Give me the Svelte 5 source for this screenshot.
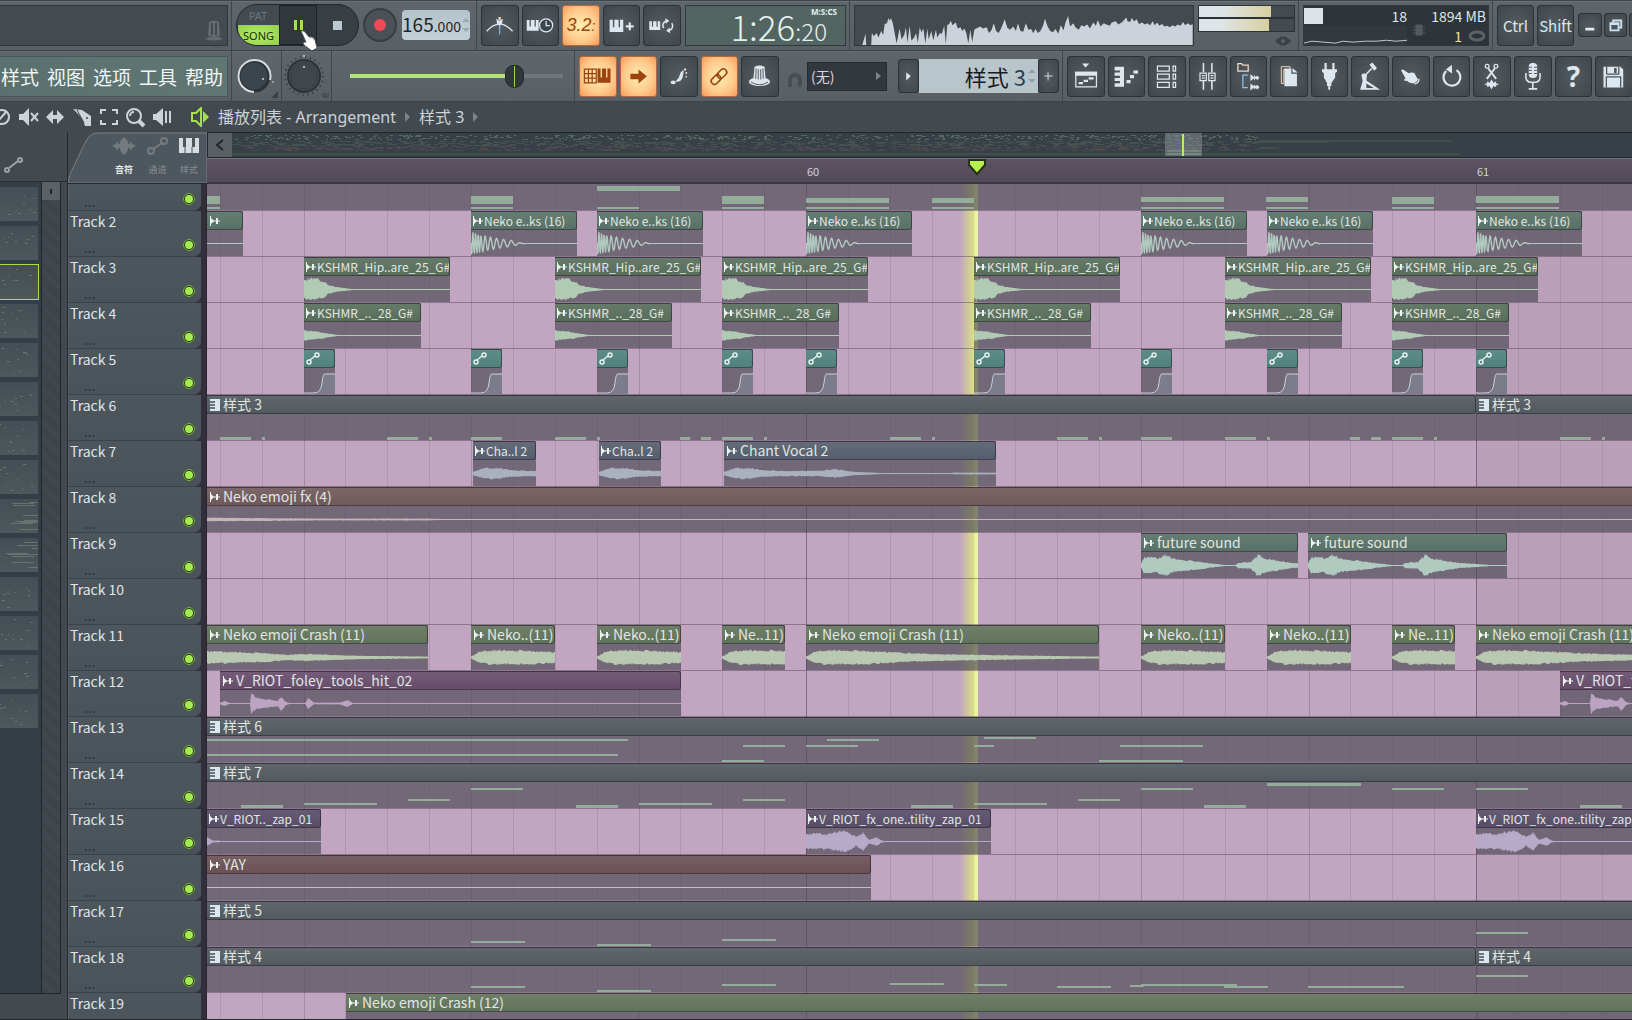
<script lang="ts">
  type Note = [x: number, y: number, w: number, h?: number];
  type Clip = { x: number; w: number; label?: string; kind: string; wave?: string };
  type Track = { name: string; clips: Clip[]; notes?: Note[] };

  const LANE_X = 207;
  const BAR_X = 599;
  const STEP = 670 / 16;
  const at = (step: number) => Math.round(BAR_X + step * STEP);

  const many = (steps: number[], w: number, label: string, kind: string, wave: string): Clip[] =>
    steps.map((s) => ({ x: at(s), w, label, kind, wave }));

  const pattern = (label: string, w = 3000): Clip => ({ x: 0, w, label, kind: 'pattern' });

  // absolute window x -> lane x
  const notes = (list: Note[]): Note[] => list.map(([x, y, w, h]) => [x - LANE_X, y, w, h]);

  const hits: [number, number][] = [
    [-14, 31], [-13, 3], [-10, 31], [-9, 3], [-8, 31], [-6, 31], [-5, 3], [-3, 10], [-2.5, 10], [-2, 31], [-1, 3],
  ];
  const hitNotes: Note[] = [0, 16, 32].flatMap((o) => hits.map(([s, w]) => [at(s + o), 42, w, 3] as Note));

  const hats = [-12, -6, -2, 4, 10, 14];

  const tracks: Track[] = [
    {
      name: '',
      clips: [{ x: 0, w: 3000, kind: 'bare' }],
      notes: notes([
        [207, 12, 13, 8], [207, 23, 13, 2],
        [471, 12, 42, 8], [471, 23, 42, 2],
        [597, 2, 83, 5], [597, 23, 42, 2],
        [722, 12, 42, 8], [722, 23, 42, 2],
        [806, 14, 83, 5], [806, 23, 83, 2],
        [932, 14, 42, 5], [932, 23, 42, 2],
        [1141, 13, 83, 5], [1141, 23, 83, 2],
        [1266, 13, 42, 5], [1266, 23, 42, 2],
        [1392, 13, 42, 7], [1392, 23, 42, 2],
        [1476, 12, 83, 7], [1476, 23, 83, 2],
      ]),
    },
    {
      name: 'Track 2',
      clips: [
        { x: 0, w: 36, label: '', kind: 'teal', wave: 'flat' },
        ...many([-8, -5, 0, 8, 11, 16], 106, 'Neko e..ks (16)', 'teal', 'kick'),
      ],
    },
    { name: 'Track 3', clips: many(hats, 146, 'KSHMR_Hip..are_25_G#', 'green', 'snare') },
    { name: 'Track 4', clips: many(hats, 117, 'KSHMR_.._28_G#', 'green', 'short') },
    { name: 'Track 5', clips: many([-12, -8, -5, -2, 0, 4, 8, 11, 14, 16], 31, '', 'auto', 'auto') },
    { name: 'Track 6', clips: [pattern('样式 3', at(16)), { x: at(16), w: 2000, label: '样式 3', kind: 'pattern' }], notes: hitNotes },
    {
      name: 'Track 7',
      clips: [
        { x: 266, w: 63, label: 'Cha..l 2', kind: 'slate', wave: 'vocal' },
        { x: 392, w: 62, label: 'Cha..l 2', kind: 'slate', wave: 'vocal' },
        { x: 517, w: 272, label: 'Chant Vocal 2', kind: 'slate', wave: 'vocal' },
      ],
    },
    { name: 'Track 8', clips: [{ x: 0, w: 3000, label: 'Neko emoji fx (4)', kind: 'brown', wave: 'thin' }] },
    {
      name: 'Track 9',
      clips: [
        { x: 934, w: 157, label: 'future sound', kind: 'teal', wave: 'future' },
        { x: 1101, w: 199, label: 'future sound', kind: 'teal', wave: 'future' },
      ],
    },
    { name: 'Track 10', clips: [] },
    {
      name: 'Track 11',
      clips: [
        { x: 0, w: 221, label: 'Neko emoji Crash (11)', kind: 'olive', wave: 'tail' },
        ...many([-8, -5, 8, 11], 84, 'Neko..(11)', 'olive', 'crash'),
        ...many([-2, 14], 63, 'Ne..11)', 'olive', 'crash'),
        ...many([0, 16], 293, 'Neko emoji Crash (11)', 'olive', 'crash'),
      ],
    },
    { name: 'Track 12', clips: many([-14, 18], 461, 'V_RIOT_foley_tools_hit_02', 'purple', 'foley') },
    {
      name: 'Track 13',
      clips: [pattern('样式 6')],
      notes: notes([
        [207, 22, 421], [207, 37, 411], [743, 28, 42], [722, 43, 42], [806, 28, 52], [827, 22, 52],
        [984, 20, 52], [974, 28, 20], [1120, 28, 83], [1099, 43, 84],
      ]),
    },
    {
      name: 'Track 14',
      clips: [pattern('样式 7')],
      notes: notes([
        [241, 42, 42, 3], [304, 40, 73], [408, 36, 42], [471, 25, 52], [576, 42, 42, 3], [639, 40, 73],
        [743, 36, 42], [911, 42, 42, 3], [974, 40, 73], [1078, 36, 42], [1141, 25, 52], [1204, 42, 42, 3],
        [1267, 20, 94, 3], [1392, 25, 52], [1476, 25, 52], [1580, 42, 42, 3],
      ]),
    },
    {
      name: 'Track 15',
      clips: [
        { x: 0, w: 114, label: 'V_RIOT.._zap_01', kind: 'violet', wave: 'blip' },
        ...many([0, 16], 185, 'V_RIOT_fx_one..tility_zap_01', 'violet', 'zap'),
      ],
    },
    { name: 'Track 16', clips: [{ x: 0, w: 664, label: 'YAY', kind: 'rust', wave: 'flat' }] },
    {
      name: 'Track 17',
      clips: [pattern('样式 5')],
      notes: notes([[471, 40, 54], [597, 43, 54], [722, 38, 54], [1476, 31, 52]]),
    },
    {
      name: 'Track 18',
      clips: [pattern('样式 4', at(16)), { x: at(16), w: 2000, label: '样式 4', kind: 'pattern' }],
      notes: notes([
        [471, 39, 54], [597, 43, 54], [722, 37, 54], [890, 36, 54], [974, 37, 33], [1057, 39, 54],
        [1130, 38, 14], [1141, 37, 96], [1224, 39, 44], [1308, 39, 96], [1476, 28, 52],
      ]),
    },
    { name: 'Track 19', clips: [{ x: 139, w: 3000, label: 'Neko emoji Crash (12)', kind: 'olive', wave: 'flat' }] },
  ];

  // abbreviated labels fill their clip and use the smaller size
  const isTight = (clip: Clip) => !!clip.label?.includes('..') && clip.kind !== 'olive';

  // amplitude envelopes: [x, half height]
  const envelopes: Record<string, [number, number][]> = {
    snare: [[0, 10], [5, 12], [13, 12], [18, 9], [21, 9], [24, 5], [32, 3], [45, 1], [55, 0]],
    short: [[0, 6], [6, 5], [15, 4], [25, 2], [38, 0]],
    vocal: [[0, 2], [12, 6], [26, 6], [38, 4], [55, 3], [95, 3], [110, 5], [130, 2], [150, 1], [165, 0], [222, 0], [230, 1], [272, 1]],
    thin: [[0, 2], [120, 1], [220, 1], [260, 0]],
    future: [[0, 2], [3, 9], [10, 9], [17, 8], [24, 12], [32, 8], [45, 6], [60, 4], [80, 1], [94, 0], [97, 3], [110, 4], [117, 12], [124, 8], [135, 6], [150, 3], [165, 2], [190, 0]],
    crash: [[0, 1], [8, 6], [20, 8], [45, 8], [70, 7], [100, 5], [130, 4], [170, 3], [293, 1]],
    tail: [[0, 7], [30, 6], [60, 5], [80, 3], [100, 4], [150, 2], [221, 1]],
    foley: [[0, 1], [5, 3], [10, 0], [30, 0], [31, 12], [36, 7], [45, 5], [58, 3], [61, 8], [66, 2], [72, 0], [85, 0], [88, 6], [94, 1], [120, 1], [127, 4], [134, 0]],
    zap: [[0, 8], [10, 9], [20, 8], [32, 11], [38, 13], [44, 10], [50, 5], [57, 10], [63, 2], [70, 5], [76, 1], [84, 0]],
    blip: [[0, 5], [6, 1], [12, 1], [16, 0]],
  };

  function amp(env: [number, number][], x: number) {
    for (let i = 1; i < env.length; i++) {
      const [x1, a1] = env[i];
      const [x0, a0] = env[i - 1];
      if (x <= x1) return a0 + ((a1 - a0) * (x - x0)) / (x1 - x0);
    }
    return 0;
  }

  const hash = (n: number) => {
    const v = Math.sin(n * 127.1 + 11.7) * 43758.5453;
    return v - Math.floor(v);
  };
  const jitter = (x: number) => 0.72 + 0.28 * hash(x);

  function wavePath(kind: string, w: number) {
    if (kind === 'kick') {
      let d = 'M0 13';
      for (let x = 0; x < 54; x += 0.5) {
        const a = 12 * Math.exp(-x / 30) * (x > 40 ? (54 - x) / 14 : 1);
        const phase = x < 10 ? x * 2.4 : 24 + 9.7 * (Math.sqrt(x) - Math.sqrt(10));
        d += `L${x} ${(13.5 + a * Math.sin(phase)).toFixed(1)}`;
      }
      return d;
    }
    const env = envelopes[kind];
    if (!env) return '';
    const end = Math.min(w, env[env.length - 1][0]);
    let top = '';
    let bottom = '';
    for (let x = 0; x <= end; x++) {
      const a = amp(env, x) * jitter(x);
      const b = amp(env, x) * jitter(x + 31);
      top += `L${x} ${(13.5 - a).toFixed(1)}`;
      bottom = `L${x} ${(13.5 + b).toFixed(1)}` + bottom;
    }
    return `M0 13.5${top}${bottom}Z`;
  }

  const gridSteps = Array.from({ length: 60 }, (_, i) => i - 14);

  const keys = 'M0 0h9v21h4V0h12v21h4V0h9v34H0z';

  // glyphs share one 114 x 123 box, the proportions of a toolbar button
  const icons: Record<string, string> = {
    metronome: '<path d="M15 80Q56 34 98 80" fill="none" stroke="currentColor" stroke-width="4"/><path d="M54 50h5l-1 40h-3z" fill="#8fb6dd"/><path d="M46 40l10 6 11-6-3 16-8 6-8-6z" fill="currentColor"/><path d="M53 34h7v10h-7z" fill="#f2d9a8"/>',
    waitInput: `<path transform="translate(12 44)" d="${keys}" fill="currentColor"/><circle cx="74" cy="61" r="21" fill="#3d454c" stroke="currentColor" stroke-width="4"/><path d="M74 47v15h12" fill="none" stroke="currentColor" stroke-width="4"/>`,
    overdub: `<path transform="translate(18 43) scale(1.15)" d="${keys}" fill="currentColor"/><path d="M79 52h7v9h9v7h-9v9h-7v-9h-9v-7h9z" fill="currentColor"/>`,
    loopRec: `<path transform="translate(17 48) scale(.92 .82)" d="${keys}" fill="currentColor"/><path d="M63 70a15 15 0 0 1 8-23M89 54a15 15 0 0 1-8 23" fill="none" stroke="currentColor" stroke-width="5"/><path d="M68 38l13 8-11 10zM84 86l-13-8 11-10z" fill="currentColor"/>`,
    typing: `<path d="M14 38h38v44H14zM14 52h38M14 67h38M27 38v44M39 38v44" fill="none" stroke="currentColor" stroke-width="4"/><path transform="translate(56 36) scale(1.1 1.35)" d="${keys}" fill="currentColor"/>`,
    arrow: '<path d="M30 53h26V39l27 22-27 23V70H30z" fill="currentColor"/>',
    slide: '<ellipse cx="39" cy="80" rx="8" ry="6" fill="currentColor"/><path d="M50 76q14 0 17-12t4-20q-8 4-9 13t-12 19z" fill="currentColor" stroke="currentColor" stroke-width="4" stroke-linejoin="round"/><circle cx="77" cy="39" r="4" fill="#e8c9a0"/><circle cx="81" cy="50" r="3" fill="currentColor"/><circle cx="81" cy="62" r="3" fill="#e8c9a0"/>',
    link: '<g transform="rotate(-45 55 62)" fill="none" stroke="currentColor" stroke-width="5"><rect x="24" y="51" width="34" height="21" rx="10"/><rect x="51" y="51" width="34" height="21" rx="10"/></g>',
    hat: '<ellipse cx="56" cy="78" rx="34" ry="14" fill="currentColor"/><path d="M36 74q20 11 40 0l-4-44q-16-8-32 0z" fill="currentColor"/><path d="M45 36l-1 33M52 38v33M60 38v33M67 36l1 33M28 79q28 18 56 0" stroke="#4a5258" stroke-width="3" fill="none"/>',
    playlist: '<path d="M45 20h23L56 33z" fill="currentColor"/><path d="M25 48h66v47H25z" fill="none" stroke="currentColor" stroke-width="4"/><path d="M23 46h70v13H23zM34 79h14v7H34zM50 72h14v7H50zM66 64h16v7H66z" fill="currentColor"/>',
    pianoRoll: '<path d="M18 30h30v64H18V83h17v-7H18V66h17v-7H18V49h17v-7H18zM56 73h13v10H56zM67 57h13v10H67zM78 42h15v10H78z" fill="currentColor"/>',
    channels: '<path d="M27 28h38v16H27zM27 54h38v16H27zM27 80h38v16H27zM77 28h8v16h-8zM77 54h8v16h-8zM77 80h8v16h-8z" fill="none" stroke="currentColor" stroke-width="4"/>',
    mixer: '<path d="M43 18v30M43 76v28M70 18v30M70 76v28" stroke="currentColor" stroke-width="5"/><path d="M32 51h20v24H32zM60 51h20v24H60zM38 59h9M38 67h9M66 59h9M66 67h9" fill="none" stroke="currentColor" stroke-width="4"/>',
    browser: '<path d="M22 20h12l4 5h17v19H22z" fill="none" stroke="#f0dcc8" stroke-width="4"/><path d="M36 57h18M38 57v40h16" fill="none" stroke="#8fc3e8" stroke-width="4"/><path d="M62 54l12 9v-7l5 7 5-5 7 8-7 7-5-5-5 6v-7l-12 9zM62 84l12 9v-7l5 7 5-5 7 8-7 7-5-5-5 6v-7l-12 9z" fill="currentColor"/>',
    copy: '<path d="M33 30h28v8H41v46h-8z" fill="none" stroke="#f0dcc8" stroke-width="3"/><path d="M43 37h22v16h18v40H43z" fill="currentColor"/><path d="M69 34l16 15H69z" fill="currentColor"/>',
    plug: '<path d="M40 18h7v20h-7zM65 18h7v20h-7zM32 38h48v8l-6 5v14L62 82v10h-4v12h-6V92h-4V82L38 65V51l-6-5z" fill="currentColor"/>',
    lamp: '<path d="M56 24l9-7 15 18-9 8z" fill="currentColor"/><path d="M63 36L40 60" stroke="currentColor" stroke-width="5"/><path d="M30 56q8-8 18 0l-2 18 44 30H26l8-28z" fill="currentColor"/><path d="M46 84l24 14H46z" fill="#4a5258"/>',
    hand: '<path d="M26 42q4-6 9-1l15 10q9-4 18-1l12 22q-4 8-14 12-14-1-22-9l-6 1q-5-5 2-9z" fill="currentColor"/><path d="M83 68q2 12-14 18" fill="none" stroke="currentColor" stroke-width="4"/>',
    undo: '<path d="M39 44a27 27 0 1 0 33-3" fill="none" stroke="currentColor" stroke-width="7"/><path d="M57 24L38 39l20 13z" fill="currentColor"/>',
    scissors: '<circle cx="42" cy="29" r="6" fill="none" stroke="currentColor" stroke-width="4"/><circle cx="70" cy="29" r="6" fill="none" stroke="currentColor" stroke-width="4"/><path d="M45 35l26 34M67 35L41 69" stroke="currentColor" stroke-width="6"/><path d="M32 86l8-2 4-7 5 5 7-11 7 11 5-5 4 7 9 2-9 3-4 7-5-5-7 11-7-11-5 5-4-7z" fill="currentColor"/>',
    mic: '<rect x="44" y="18" width="27" height="48" rx="12" fill="currentColor"/><path d="M44 32h10M44 42h10M44 52h10M61 32h10M61 42h10M61 52h10" stroke="#4a5258" stroke-width="3"/><path d="M35 50v16q2 12 14 14h17q12-2 14-14V50M57 80v20M44 101h27" fill="none" stroke="currentColor" stroke-width="5"/>',
    save: '<path d="M24 30h54l9 9v58H24z" fill="currentColor"/><path d="M34 54V30M73 54V30M34 54h39M33 97V63h46v34" stroke="#4a5258" stroke-width="4" fill="none"/><path d="M58 34h8v16h-8z" fill="#4a5258"/>',
  };

  const recordTools = ['metronome', 'waitInput', 'countdown', 'overdub', 'loopRec'];
  const editTools = [
    { icon: 'typing', on: true },
    { icon: 'arrow', on: true },
    { icon: 'slide', on: false },
    { icon: 'link', on: true },
    { icon: 'hat', on: false },
  ];
  const windows = ['playlist', 'pianoRoll', 'channels', 'mixer', 'browser', 'copy', 'plug', 'lamp', 'hand', 'undo', 'scissors', 'mic', 'help', 'save'];
  const menus = ['样式', '视图', '选项', '工具', '帮助'];

  const spectrum =
    '13,135 35,135 45,100 47,135 62,135 64,98 70,108 78,98 84,112 92,92 98,104 103,70 110,68 114,52 118,60 122,52 128,70 133,98 139,130 148,84 154,118 162,104 167,80 172,128 178,76 184,122 192,112 198,98 203,128 209,80 214,96 220,84 226,130 232,84 236,118 244,92 250,120 258,88 262,112 270,98 276,100 283,76 288,132 292,74 298,70 303,60 308,74 318,66 324,84 332,80 338,92 344,84 350,98 356,130 362,88 368,126 374,88 380,84 392,78 400,84 412,80 418,98 426,90 433,68 440,92 448,98 456,82 466,56 474,82 482,88 492,78 500,92 506,68 514,92 522,94 530,68 538,88 546,86 552,98 560,86 566,98 574,92 582,76 588,54 596,78 604,92 612,96 620,86 628,100 636,74 644,90 650,66 658,46 664,78 674,68 680,80 690,88 698,74 706,78 716,72 724,84 734,66 742,76 748,58 756,78 766,68 774,72 784,76 790,66 802,62 810,72 822,64 834,50 838,62 846,64 850,52 858,62 866,56 872,70 882,66 890,72 898,68 906,74 914,62 920,74 928,66 934,76 942,70 950,78 958,76 966,80 974,74 982,78 990,72 998,76 1006,64 1012,74 1020,68 1028,74 1035,70 1035,135';

  const picker = Array.from({ length: 14 }, (_, i) => i);
  const pickerDots = (i: number) =>
    Array.from({ length: 9 }, (_, k) => ({
      x: Math.floor(hash(i * 20 + k) * 34),
      y: 3 + Math.floor(hash(i * 31 + k + 5) * 28),
      w: i === 8 || i === 9 ? 22 : 1 + (k % 3),
    }));
  // miniature arrangement shown above the ruler
  const mini = Array.from({ length: 1500 }, (_, i) => {
    const row = i % 3;
    return {
      x: Math.floor(hash(i) * 1026),
      y: [2, 8, 13][row] + Math.floor(hash(i + 0.5) * 5),
      w: row === 0 ? 2 + (i % 2) : 3 + (i % 5),
      c: ['#53685f', '#45524f', '#4c4a4c'][row],
    };
  });
</script>

{#snippet glyph(name: string)}
  {#if name === 'help'}
    <span class="help">?</span>
  {:else if name === 'countdown'}
    <span class="count">3.2<small>:</small></span>
  {:else}
    <svg viewBox="0 0 114 123" aria-hidden="true">{@html icons[name]}</svg>
  {/if}
{/snippet}

<div class="app">
  <header class="bar">
    <div class="panel hint-panel">
      <svg width="18" height="22" viewBox="0 0 18 22"><path d="M4 3q5-3 10 0l1 14H3zM0 20q9-6 18 0-9 3-18 0z" fill="#646c71" /><path d="M7 4v12M11 4v12" stroke="#434b51" stroke-width="2" /></svg>
    </div>
    <div class="rule"></div>
    <div class="transport">
      <div class="mode">
        <button class="pat">PAT</button>
        <button class="song">SONG</button>
      </div>
      <button class="pause" aria-label="Pause"><i></i><i></i></button>
      <button class="stop" aria-label="Stop"><i></i></button>
      <svg class="cursor" width="18" height="21" viewBox="0 0 18 21"><path d="M1 1q2-1 4 1l4 5q4-1 6 3l2 8-5 3-8-6q-2-3 2-3z" fill="#fff" stroke="#555d62" /></svg>
    </div>
    <button class="record" aria-label="Record"><i></i></button>
    <div class="tempo">
      <span>165<small>.000</small></span>
      <svg width="8" height="14" viewBox="0 0 8 14"><path d="M4 0l4 4H0zM4 14l4-4H0z" fill="#9aa9b0" /></svg>
    </div>
    <div class="rule"></div>
    <div class="tools">
      {#each recordTools as name}
        <button class="tool" class:on={name === 'countdown'} aria-label={name}>{@render glyph(name)}</button>
      {/each}
    </div>
    <div class="panel time">
      <span class="clock">1:26<small>:20</small></span>
      <span class="unit">M:S:CS</span>
    </div>
    <div class="rule"></div>
    <div class="panel spectrum">
      <svg viewBox="13 15 1023 120" preserveAspectRatio="none"><polygon points={spectrum} fill="#ccd2d9" /></svg>
    </div>
    <div class="meters">
      <div class="meter"><i></i></div>
      <div class="meter second"><i></i></div>
      <svg width="16" height="10" viewBox="0 0 16 10"><path d="M0 5q8-9 16 0-8 9-16 0z" fill="#3a4147" /><circle cx="8" cy="5" r="2" fill="#596066" /></svg>
    </div>
    <div class="rule"></div>
    <div class="panel cpu">
      <div class="cpu-left">
        <div class="cpu-top"><i></i><span>18</span></div>
        <svg viewBox="0 0 105 20" preserveAspectRatio="none"><path d="M0 18l8-2 12 1 12 1 8-2 10 1 12-1 12 0 10-1 10 1 11-1" fill="none" stroke="#c5ccd2" stroke-width="1" /></svg>
      </div>
      <svg class="chip" width="12" height="12" viewBox="0 0 12 12"><path d="M3 1h6v10H3zM0 3h12M0 6h12M0 9h12" fill="#545b61" stroke="#545b61" /></svg>
      <div class="cpu-right">
        <span>1894 MB</span>
        <span class="poly">1 <svg width="18" height="12" viewBox="0 0 18 12"><ellipse cx="9" cy="6" rx="7" ry="4" fill="none" stroke="#5b6268" stroke-width="3" /></svg></span>
      </div>
    </div>
    <div class="rule"></div>
    <div class="keys">
      <button class="tool">Ctrl</button>
      <button class="tool">Shift</button>
    </div>
    <div class="window-buttons">
      <button class="tool" aria-label="Minimize"><svg viewBox="0 0 24 24"><path d="M7 15h10v3H7z" fill="#e3eaf0" /></svg></button>
      <button class="tool" aria-label="Restore"><svg viewBox="0 0 24 24"><path d="M6 10h9v8H6zM6 11h9M9 9V7h9v8h-2" fill="none" stroke="#cfe3f2" stroke-width="2" /></svg></button>
      <button class="tool" aria-label="Close"></button>
    </div>
  </header>

  <div class="bar second-bar">
    <nav class="panel menu">
      {#each menus as item}
        <button>{item}</button>
      {/each}
    </nav>
    <div class="rule"></div>
    <div class="knob">
      <svg width="48" height="50" viewBox="0 0 48 50"><circle cx="22" cy="25" r="15" fill="#3d454c" stroke="#2b3238" stroke-width="3" /><path d="M22 41a16 16 0 1 1 16-12" fill="none" stroke="#d5dde3" stroke-width="2" /><circle cx="31" cy="28" r="1" fill="#cfd6dc" /><circle cx="41" cy="31" r="1" fill="#aab2b8" /><path d="M46 40v7h-7z" fill="#3a4147" /></svg>
    </div>
    <div class="rule"></div>
    <div class="knob">
      <svg width="48" height="50" viewBox="0 0 48 50"><circle cx="22" cy="25" r="19" fill="none" stroke="#30373c" stroke-width="2" stroke-dasharray="1 4" /><circle cx="22" cy="25" r="16" fill="#41494f" stroke="#2b3238" stroke-width="2" /><circle cx="22" cy="25" r="13" fill="#40484e" stroke="#384046" /><circle cx="22" cy="5" r="1" fill="#cfd6dc" /><circle cx="22" cy="16" r="1" fill="#cfd6dc" /><path d="M41 42v4h5v-4M43 42v4" stroke="#3a4147" fill="none" /></svg>
    </div>
    <div class="rule"></div>
    <div class="master"><input type="range" min="0" max="100" value="80" aria-label="Main pitch" /></div>
    <div class="rule"></div>
    <div class="tools">
      {#each editTools as tool}
        <button class="tool" class:on={tool.on} aria-label={tool.icon}>{@render glyph(tool.icon)}</button>
      {/each}
    </div>
    <svg class="magnet" width="16" height="16" viewBox="0 0 16 16"><path d="M3 15V8a5 5 0 0 1 10 0v7" fill="none" stroke="#474e54" stroke-width="4" /></svg>
    <div class="snap">
      <select aria-label="Snap"><option>(无)</option></select>
      <svg width="5" height="8" viewBox="0 0 5 8"><path d="M0 0l5 4-5 4z" fill="#7c8389" /></svg>
    </div>
    <div class="pattern-picker">
      <button class="tool" aria-label="Pattern menu"><svg viewBox="0 0 21 34"><path d="M8 13l5 4-5 5z" fill="#e3eaf0" /></svg></button>
      <div class="pattern-name">
        <span>样式 <b>3</b></span>
        <svg width="8" height="14" viewBox="0 0 8 14"><path d="M4 0l4 4H0zM4 14l4-4H0z" fill="#94a3ab" /></svg>
      </div>
      <button class="tool" aria-label="Add pattern"><svg viewBox="0 0 21 34"><path d="M10 13v9M6 17h9" stroke="#e3eaf0" /></svg></button>
    </div>
    <div class="rule"></div>
    <div class="tools windows">
      {#each windows as name}
        <button class="tool" aria-label={name}>{@render glyph(name)}</button>
      {/each}
    </div>
  </div>

  <div class="caption">
    <svg width="176" height="24" viewBox="0 0 176 24" fill="none" stroke="#cdd3d8" stroke-width="2">
      <circle cx="2" cy="12" r="7" /><path d="M-2 16l8-9" />
      <path d="M19 9h4l6-6v18l-6-6h-4z" fill="#cdd3d8" stroke="none" /><path d="M31 8l7 8M38 8l-7 8" />
      <path d="M46 12l7-7v5h4V5l7 7-7 7v-5h-4v5z" fill="#cdd3d8" stroke="none" />
      <path d="M73 4l9 1 9 6v10h-6q-1-7-12-17z" fill="#cdd3d8" stroke="none" /><path d="M77 5l7 13" stroke="#424a50" stroke-width="1" /><circle cx="87" cy="13" r="1" fill="#424a50" stroke="none" />
      <path d="M101 9V5h5M112 5h5v4M117 15v4h-5M106 19h-5v-4" />
      <circle cx="134" cy="11" r="7" /><path d="M139 16l5 5" stroke-width="4" /><path d="M130 11a4 4 0 0 1 4-4" />
      <path d="M153 9h3l7-6v18l-7-6h-3z" fill="#cdd3d8" stroke="none" /><path d="M166 6v12M170 6v12" />
    </svg>
    <svg class="speaker" width="18" height="20" viewBox="0 0 18 20"><path d="M1 6h4l5-5v18l-5-5H1z" fill="none" stroke="#a8e04a" stroke-width="2" /><path d="M12 4l6 6-6 6z" fill="#a8e04a" /></svg>
    <span>播放列表 - Arrangement</span>
    <svg width="5" height="10" viewBox="0 0 5 10"><path d="M0 0l5 5-5 5z" fill="#7c8389" /></svg>
    <span>样式 3</span>
    <svg width="5" height="10" viewBox="0 0 5 10"><path d="M0 0l5 5-5 5z" fill="#7c8389" /></svg>
  </div>

  <main class="playlist">
    <aside class="picker">
      <div class="picker-head">
        <svg width="21" height="18" viewBox="0 0 21 18" fill="none" stroke="#9aa1a7" stroke-width="2"><circle cx="4" cy="14" r="2" /><circle cx="17" cy="4" r="2" /><path d="M6 12l9-7" /></svg>
      </div>
      <div class="picker-body">
        <div class="cells">
          {#each picker as i}
            <div class="cell" class:selected={i === 2}>
              <svg width="38" height="34" viewBox="0 0 38 34">
                {#each pickerDots(i) as d}
                  <rect x={d.x} y={d.y} width={d.w} height="1" fill="#68736f" />
                {/each}
              </svg>
            </div>
          {/each}
        </div>
        <div class="scroller"><button aria-label="Scroll"></button></div>
      </div>
      <div class="picker-foot"></div>
    </aside>

    <section class="heads">
      <div class="tab">
        <svg class="tab-shape" viewBox="0 0 139 51" preserveAspectRatio="none"><path d="M0 51C1 42 8 30 14 17 19 7 21 1 30 1H139V51z" fill="#4e575d" stroke="#788086" /></svg>
        <button>
          <svg width="24" height="18" viewBox="0 0 24 18"><path d="M0 9l4-2 1-3 2 4 2-5 3-3 3 3 2 5 2-4 1 3 4 2-4 2-1 3-2-4-2 5-3 3-3-3-2-5-2 4-1-3z" fill="#737b81" /></svg>
          <span class="lit">音符</span>
        </button>
        <button>
          <svg width="21" height="18" viewBox="0 0 21 18" fill="none" stroke="#737b81" stroke-width="2"><circle cx="4" cy="14" r="3" /><circle cx="17" cy="4" r="3" /><path d="M6 12l9-6" /></svg>
          <span>通道</span>
        </button>
        <button>
          <svg width="20" height="18" viewBox="0 0 20 18"><path d="M0 1h4v9h3V1h6v9h3V1h4v15H0z" fill="#d7dde2" /><path d="M6 10v6M13 10v6" stroke="#4e575d" /></svg>
          <span>样式</span>
        </button>
      </div>
      {#each tracks as track, i}
        <div class="head" class:first={i === 0}>
          <div class="head-face">
            <span class="name">{track.name}</span>
            {#if i < tracks.length - 1}
              <span class="dots">...</span>
            {/if}
            <button class="led" aria-label="Mute {track.name}"></button>
          </div>
        </div>
      {/each}
    </section>

    <section class="timeline">
      <div class="overview">
        <button aria-label="Scroll left">
          <svg width="8" height="12" viewBox="0 0 8 12"><path d="M7 1L1 6l6 5" fill="none" stroke="#20262b" stroke-width="2" /></svg>
        </button>
        <div class="mini">
          <svg width="1400" height="24" viewBox="0 0 1400 24">
            {#each mini as m}
              <rect x={m.x} y={m.y} width={m.w} height="1" fill={m.c} />
            {/each}
            <path d="M0 21h1227M1027 9h70M1027 8h193M1027 15h20" stroke="#4a5c50" />
            <rect x="933" y="0" width="37" height="23" fill="#a0a8ac" opacity=".4" />
            <path d="M935 18h34M935 21h34" stroke="#7fa088" />
            <path d="M951 1v22" stroke="#b8f05a" stroke-width="2" />
          </svg>
        </div>
      </div>
      <div class="ruler">
        <span style="left: {at(0)}px">60</span>
        <span style="left: {at(16)}px">61</span>
        <svg class="marker" style="left: {at(4) - 4}px" width="20" height="17" viewBox="0 0 20 17"><path d="M2 1h16v5l-8 9-8-9z" fill="#b4f04e" stroke="#263012" stroke-width="2" /></svg>
      </div>
      <div class="lanes">
        <div class="next-bar" style="left: {at(16)}px"></div>
        {#each gridSteps as s}
          <i class="grid" class:bar-line={s % 16 === 0} class:beat={s % 4 === 0} style="left: {at(s)}px"></i>
        {/each}
        <div class="playhead" style="left: {at(4) - 14}px"></div>
        {#each tracks as track, i}
          <div class="lane" class:first={i === 0}>
            {#each track.clips as clip}
              <div class="clip {clip.kind}" style="left: {clip.x}px; width: {clip.w}px">
                {#if clip.kind !== 'bare'}
                  <div class="clip-head" class:tight={isTight(clip)}>
                    {#if clip.kind === 'auto'}
                      <svg width="14" height="13" viewBox="0 0 14 13" fill="none" stroke="#e6f2f0" stroke-width="1.5"><circle cx="3" cy="10" r="2" /><circle cx="11" cy="3" r="2" /><path d="M4 8l5-4" /></svg>
                    {:else if clip.kind === 'pattern'}
                      <svg width="11" height="12" viewBox="0 0 11 12"><path d="M1 0h10v12H1z" fill="#dbe6ee" /><path d="M1 3h5M1 6h5M1 9h5" stroke="#454d54" stroke-width="1.5" /></svg>
                    {:else}
                      <svg width="11" height="10" viewBox="0 0 11 10"><path d="M1 1l4 4-4 4z" fill="#eef4f2" /><path d="M1.5 0v10M4 5h7" stroke="#eef4f2" /><path d="M8 2v6" stroke="#eef4f2" stroke-width="2" /></svg>
                    {/if}
                    <span>{clip.label}</span>
                  </div>
                {/if}
                {#if clip.wave === 'auto'}
                  <svg class="wave" width="31" height="26" viewBox="0 0 31 26"><path d="M10 25q7 0 8-10t3-9h10v20H10z" fill="#8c9aa6" opacity=".4" /><path d="M0 25h10q7 0 8-10t3-9h10" fill="none" stroke="#c8d2d6" /></svg>
                {:else if clip.wave}
                  <svg class="wave" height="26" width={clip.w}>
                    <path d="M{clip.wave === 'kick' ? 50 : 0} 13.5H{clip.w}" stroke="var(--wave)" />
                    <path d={wavePath(clip.wave, clip.w)} fill={clip.wave === 'kick' ? 'none' : 'var(--wave)'} stroke={clip.wave === 'kick' ? 'var(--wave)' : 'none'} stroke-width="1.4" />
                  </svg>
                {/if}
              </div>
            {/each}
            {#each track.notes ?? [] as [x, y, w, h]}
              <i class="note" style="left: {x}px; top: {y}px; width: {w}px; height: {h ?? 2}px"></i>
            {/each}
          </div>
        {/each}
      </div>
    </section>
  </main>
</div>

<style>
  :global(body) {
    margin: 0;
    background: #353d45;
  }

  .app {
    height: 100vh;
    display: flex;
    flex-direction: column;
    overflow: hidden;
    font-family: 'Noto Sans CJK SC', sans-serif;
    color: #dfe5ea;
    box-sizing: border-box;
    border-bottom: 1px solid #22282d;
  }

  button {
    padding: 0;
    border: 0;
    background: none;
    color: inherit;
    font: inherit;
    flex: none;
  }

  svg {
    display: block;
    flex: none;
  }

  .bar {
    flex: none;
    height: 51px;
    display: flex;
    align-items: center;
    overflow: hidden;
    box-sizing: border-box;
    background: linear-gradient(#5e666c, #585f65);
    border-bottom: 1px solid #3c4349;
    box-shadow: inset 0 1px #3e454b, inset 0 2px #6a7177;
  }

  .second-bar {
    box-shadow: inset 0 1px #666e74;
  }

  .rule {
    flex: none;
    width: 1px;
    height: 100%;
    margin: 0 4px 0 3px;
    background: #3f464c;
  }

  .panel {
    flex: none;
    height: 41px;
    box-sizing: border-box;
    background: #434b51;
    border: 1px solid #31383d;
  }

  .hint-panel {
    width: 228px;
    display: flex;
    align-items: flex-end;
    justify-content: flex-end;
    padding: 4px;
    border-left: 0;
  }

  .transport {
    position: relative;
    flex: none;
    width: 123px;
    height: 42px;
    display: flex;
    border-radius: 21px;
    background: #2c3338;
    box-sizing: border-box;
    border: 1px solid #23292e;
  }

  .mode {
    width: 42px;
    display: flex;
    flex-direction: column;
    overflow: hidden;
    border-radius: 20px 0 0 20px;
    font-family: 'Noto Sans', sans-serif;
    font-size: 11px;
  }

  .pat {
    height: 20px;
    background: #434b51;
    color: #6c757b;
  }

  .song {
    height: 20px;
    margin-left: 1px;
    border-radius: 0 0 0 16px;
    background: radial-gradient(#b4ee6c, #93cf4a);
    color: #1d2a10;
  }

  .pause {
    width: 38px;
    display: flex;
    gap: 3px;
    align-items: center;
    justify-content: center;
    background: #31383d;
    border: 1px solid #1c2226;
  }

  .pause i {
    width: 3px;
    height: 10px;
    background: #a8e04a;
  }

  .stop {
    flex: 1;
    display: flex;
    align-items: center;
    justify-content: center;
    border-radius: 0 20px 20px 0;
    background: #373e44;
  }

  .stop i {
    width: 9px;
    height: 9px;
    background: #bcc8d0;
  }

  .cursor {
    position: absolute;
    left: 63px;
    top: 25px;
  }

  .record {
    width: 34px;
    height: 34px;
    margin: 0 5px 0 4px;
    display: flex;
    align-items: center;
    justify-content: center;
    border-radius: 50%;
    background: #4a5157;
    box-sizing: border-box;
    border: 2px solid #363d43;
  }

  .record i {
    width: 12px;
    height: 12px;
    border-radius: 50%;
    background: #ee4a58;
  }

  .tempo {
    flex: none;
    width: 68px;
    height: 30px;
    margin-right: 3px;
    display: flex;
    gap: 1px;
    align-items: center;
    justify-content: center;
    border-radius: 4px;
    background: linear-gradient(#b4c3cb, #c2d0d7);
    color: #20262b;
    font-size: 19px;
    line-height: 30px;
  }

  .tempo small {
    font-size: 14px;
  }

  .tools {
    flex: none;
    width: 200px;
    display: flex;
    gap: 3px;
  }

  .tool {
    flex: 1;
    height: 41px;
    min-width: 0;
    overflow: hidden;
    display: flex;
    align-items: center;
    justify-content: center;
    box-sizing: border-box;
    border: 1px solid #2b3238;
    border-radius: 3px;
    background: radial-gradient(#535b61, #3f474d);
    color: #dfe7ee;
    font-size: 15px;
  }

  .tool svg {
    width: 100%;
    height: 100%;
  }

  .tool.on {
    border: 1px solid #b0683c;
    background: radial-gradient(#ffefb4, #ffc98a 60%, #f89a58);
    color: #9c4310;
  }

  .count {
    font: italic 18px 'Liberation Sans', sans-serif;
  }

  .count small {
    font-size: 14px;
  }

  .help {
    font: bold 28px 'Noto Sans', sans-serif;
  }

  .time {
    width: 161px;
    margin-left: 4px;
    display: flex;
    justify-content: flex-end;
    background: #536562;
    color: #e3f1ef;
  }

  .clock {
    font-size: 35px;
    font-weight: 300;
    line-height: 40px;
  }

  .clock small {
    font-size: 24px;
  }

  .unit {
    width: 34px;
    margin-left: -16px;
    font: bold 8px/12px 'Noto Sans', sans-serif;
  }

  .spectrum {
    flex: 1;
    min-width: 100px;
  }

  .spectrum svg {
    width: 100%;
    height: 100%;
  }

  .meters {
    flex: none;
    width: 97px;
    height: 41px;
    margin-left: 4px;
    display: flex;
    flex-direction: column;
    align-items: flex-end;
  }

  .meter {
    width: 100%;
    height: 14px;
    box-sizing: border-box;
    border: 1px solid #2b3238;
    background: #434b51;
  }

  .meter i {
    display: block;
    width: 72px;
    height: 100%;
    background: linear-gradient(90deg, #dfe4e8 30%, #d8d0a0);
  }

  .meter.second i {
    width: 70px;
  }

  .meters svg {
    margin: 4px 4px 0;
  }

  .cpu {
    width: 186px;
    display: flex;
    justify-content: space-between;
    background: #2d343a;
    font-size: 14px;
    line-height: 20px;
  }

  .cpu-left {
    width: 103px;
  }

  .cpu-top {
    height: 20px;
    display: flex;
    justify-content: space-between;
  }

  .cpu-top i {
    width: 19px;
    height: 16px;
    margin-top: 2px;
    background: #dce2e8;
  }

  .cpu-left svg {
    width: 103px;
    height: 19px;
    background: #323a40;
  }

  .chip {
    align-self: center;
    margin-top: 10px;
  }

  .cpu-right {
    width: 64px;
    margin-left: -6px;
    display: flex;
    flex-direction: column;
    align-items: flex-end;
    padding-right: 2px;
    box-sizing: border-box;
  }

  .poly {
    display: flex;
    gap: 6px;
    align-items: center;
    color: #ece0a4;
  }

  .keys {
    flex: none;
    width: 77px;
    display: flex;
    gap: 3px;
  }

  .window-buttons {
    flex: none;
    width: 75px;
    margin: 0 -21px 0 4px;
    display: flex;
    gap: 2px;
  }

  .window-buttons .tool {
    height: 24px;
  }

  .menu {
    width: 228px;
    padding-right: 4px;
    display: flex;
    gap: 8px;
    align-items: center;
    justify-content: flex-end;
    border-left: 0;
    background: linear-gradient(90deg, #5a716f, #607673);
    border-color: #46585a;
    color: #f0f6f6;
    font-size: 19px;
  }

  .knob {
    flex: none;
    width: 42px;
  }

  .knob svg {
    margin-left: -4px;
  }

  .master {
    flex: none;
    width: 213px;
    margin: 0 8px 0 14px;
    display: flex;
    align-items: center;
  }

  .master input {
    appearance: none;
    width: 100%;
    height: 24px;
    margin: 0;
    background: linear-gradient(90deg, #b4e578 164px, #70777d 164px) center / 100% 4px no-repeat;
  }

  .master input::-webkit-slider-thumb {
    appearance: none;
    width: 19px;
    height: 23px;
    border-radius: 9px 9px 10px 10px;
    border: 1px solid #1f2529;
    background: linear-gradient(90deg, #30373b 8px, #9cd64a 8px, #9cd64a 9px, #30373b 9px);
  }

  .magnet {
    margin: 8px 4px 0 8px;
  }

  .snap {
    flex: none;
    width: 80px;
    height: 29px;
    margin-right: 11px;
    padding: 0 5px 0 3px;
    box-sizing: border-box;
    display: flex;
    align-items: center;
    border: 1px solid #262c31;
    background: #33383f;
  }

  .snap select {
    appearance: none;
    flex: 1;
    min-width: 0;
    height: 27px;
    padding: 0;
    border: 0;
    background: none;
    color: #d7d6e2;
    font: 14px 'Noto Sans CJK SC', sans-serif;
  }

  .pattern-picker {
    flex: 1;
    min-width: 120px;
    height: 34px;
    display: flex;
  }

  .pattern-picker .tool {
    flex: none;
    width: 21px;
    height: 34px;
  }

  .pattern-name {
    flex: 1;
    display: flex;
    gap: 2px;
    padding-right: 2px;
    align-items: center;
    justify-content: flex-end;
    background: #b8c6cc;
    color: #171b1f;
    font-size: 22px;
    line-height: 30px;
  }

  .pattern-name b {
    font-weight: 400;
    color: #2d4050;
  }

  .windows {
    width: 566px;
    margin-right: -1px;
  }

  .caption {
    flex: none;
    height: 30px;
    display: flex;
    align-items: center;
    gap: 9px;
    background: #424a50;
    color: #ccd2d7;
    font: 16px/30px 'Noto Sans', 'Noto Sans CJK SC', sans-serif;
  }

  .speaker {
    margin-left: 6px;
  }

  .playlist {
    flex: 1;
    min-height: 0;
    display: flex;
    background: #424a50;
  }

  .picker {
    flex: none;
    width: 67px;
    display: flex;
    flex-direction: column;
  }

  .picker-head {
    flex: none;
    height: 50px;
    padding: 24px 0 0 3px;
    box-sizing: border-box;
    border-bottom: 1px solid #262d32;
  }

  .picker-body {
    flex: 1;
    min-height: 0;
    width: 61px;
    display: flex;
    gap: 3px;
    box-sizing: border-box;
    border: solid #20262b;
    border-width: 0 1px 1px 0;
    background: #353e46;
  }

  .cells {
    flex: 1;
    padding-top: 5px;
    display: flex;
    flex-direction: column;
    gap: 5px;
  }

  .cell {
    flex: none;
    height: 34px;
    background: linear-gradient(#454e54, #4e575c);
  }

  .cell.selected {
    outline: 1px solid #a8e04a;
  }

  .scroller {
    width: 18px;
    border-left: 1px solid #20262b;
    background: repeating-linear-gradient(45deg, #3a4248 0 1px, #434b52 1px 2px);
  }

  .scroller button {
    display: block;
    width: 18px;
    height: 18px;
    background: linear-gradient(#20262b, #20262b) center / 2px 5px no-repeat #5a6268;
  }

  .picker-foot {
    flex: none;
    height: 25px;
  }

  .heads {
    flex: none;
    width: 140px;
    overflow: hidden;
    border-left: 1px solid #23292e;
    box-sizing: border-box;
    background: #332f3a;
  }

  .tab {
    position: relative;
    height: 52px;
    padding: 5px 8px 0 0;
    box-sizing: border-box;
    display: flex;
    gap: 11px;
    justify-content: flex-end;
    background: #424a50;
    border-bottom: 1px solid #23292e;
  }

  .tab-shape {
    position: absolute;
    inset: 0;
    width: 100%;
    height: 100%;
  }

  .tab button {
    position: relative;
    display: flex;
    flex-direction: column;
    gap: 8px;
    align-items: center;
    font: 9px/14px 'Noto Sans CJK SC', sans-serif;
    color: #858d92;
  }

  .tab .lit {
    font-weight: bold;
    color: #e3e8ec;
  }

  .head {
    height: 46px;
    padding-right: 6px;
  }

  .head.first {
    height: 27px;
  }

  .head-face {
    position: relative;
    height: 100%;
    padding-left: 1px;
    box-sizing: border-box;
    border-radius: 0 0 7px 0;
    border-left: 1px solid #5a6268;
    border-bottom: 1px solid #3b4349;
    background: linear-gradient(#4d565c, #4a5359);
  }

  .name {
    display: block;
    font-size: 14px;
    line-height: 21px;
  }

  .dots {
    position: absolute;
    left: 15px;
    bottom: 2px;
    font: 14px/12px 'Noto Sans', sans-serif;
    color: #2b3238;
  }

  .led {
    position: absolute;
    right: 6px;
    bottom: 5px;
    width: 12px;
    height: 12px;
    border-radius: 50%;
    box-sizing: border-box;
    border: 2px solid #2a3a20;
    outline: 1px solid #7fae44;
    outline-offset: -1px;
    background: #a4ea50;
  }

  .timeline {
    flex: 1;
    min-width: 0;
    display: flex;
    flex-direction: column;
  }

  .overview {
    flex: none;
    height: 26px;
    display: flex;
    box-sizing: border-box;
    border: solid #20262b;
    border-width: 1px 0;
    background: #384047;
  }

  .overview button {
    width: 25px;
    display: flex;
    align-items: center;
    justify-content: center;
    box-sizing: border-box;
    border-left: 1px solid #20262b;
    background: #596167;
  }

  .mini {
    flex: 1;
    min-width: 0;
    overflow: hidden;
  }

  .ruler {
    position: relative;
    flex: none;
    height: 26px;
    overflow: hidden;
    box-sizing: border-box;
    border-top: 1px solid #7a7480;
    border-bottom: 2px solid #3c3842;
    background: linear-gradient(#5b5361, #534b59);
  }

  .ruler span {
    position: absolute;
    top: 5px;
    padding-left: 1px;
    font: 11px/14px 'Noto Sans CJK SC', sans-serif;
    color: #d6cfda;
  }

  .marker {
    position: absolute;
    top: 0;
    margin-left: -3px;
  }

  .lanes {
    position: relative;
    flex: 1;
    min-height: 0;
    overflow: hidden;
    background: #c1a5c1;
    border-left: 1px solid #2a2630;
    margin-left: -1px;
  }

  .next-bar {
    position: absolute;
    inset: 0;
    background: #ba9fb9;
  }

  .grid {
    position: absolute;
    top: 0;
    bottom: 0;
    width: 1px;
    background: rgba(80, 55, 85, 0.14);
  }

  .grid.beat {
    background: rgba(70, 50, 75, 0.24);
  }

  .grid.bar-line {
    background: rgba(50, 35, 55, 0.45);
  }

  .playhead {
    position: absolute;
    top: 0;
    bottom: 0;
    width: 18px;
    background: linear-gradient(90deg, rgba(216, 226, 110, 0), #dbe082 14px, #eaf4a4 15px);
  }

  .lane {
    position: relative;
    height: 46px;
    box-sizing: border-box;
    border-bottom: 1px solid rgba(80, 58, 84, 0.45);
  }

  .lane.first {
    height: 27px;
  }

  .clip {
    position: absolute;
    top: 0;
    bottom: 0;
    --head: #52595f;
    --wave: #c4bcc8;
    background: rgba(75, 73, 82, 0.66);
  }

  .clip-head {
    height: 19px;
    padding: 0 0 0 2px;
    display: flex;
    gap: 3px;
    align-items: center;
    overflow: hidden;
    white-space: nowrap;
    box-sizing: border-box;
    border: solid rgba(30, 30, 38, 0.55);
    border-width: 1px 1px 1px 0;
    border-radius: 0 3px 3px 0;
    background: linear-gradient(color-mix(in srgb, var(--head) 92%, white), var(--head));
    color: #e0e6e2;
    font-size: 14px;
    line-height: 17px;
  }

  .clip-head.tight {
    padding-left: 1px;
    gap: 1px;
    font-size: 12px;
  }

  .wave {
    position: absolute;
    left: 0;
    top: 19px;
  }

  .teal {
    --head: #587166;
    --wave: #b0cabf;
  }

  .green {
    --head: #586e5b;
    --wave: #b1cab4;
  }

  .auto {
    --head: #50827d;
  }

  .slate {
    --head: #565e6d;
    --wave: #a8b1bd;
  }

  .brown {
    --head: #70595b;
    --wave: #c8b5b8;
  }

  .olive {
    --head: #62735b;
    --wave: #b9c8b0;
  }

  .purple {
    --head: #674d6b;
    --wave: #bba3c1;
  }

  .violet {
    --head: #584d68;
    --wave: #b7a9c8;
  }

  .rust {
    --head: #6b5155;
    --wave: #ccbcc4;
  }

  .note {
    position: absolute;
    background: #93ad9a;
  }
</style>
